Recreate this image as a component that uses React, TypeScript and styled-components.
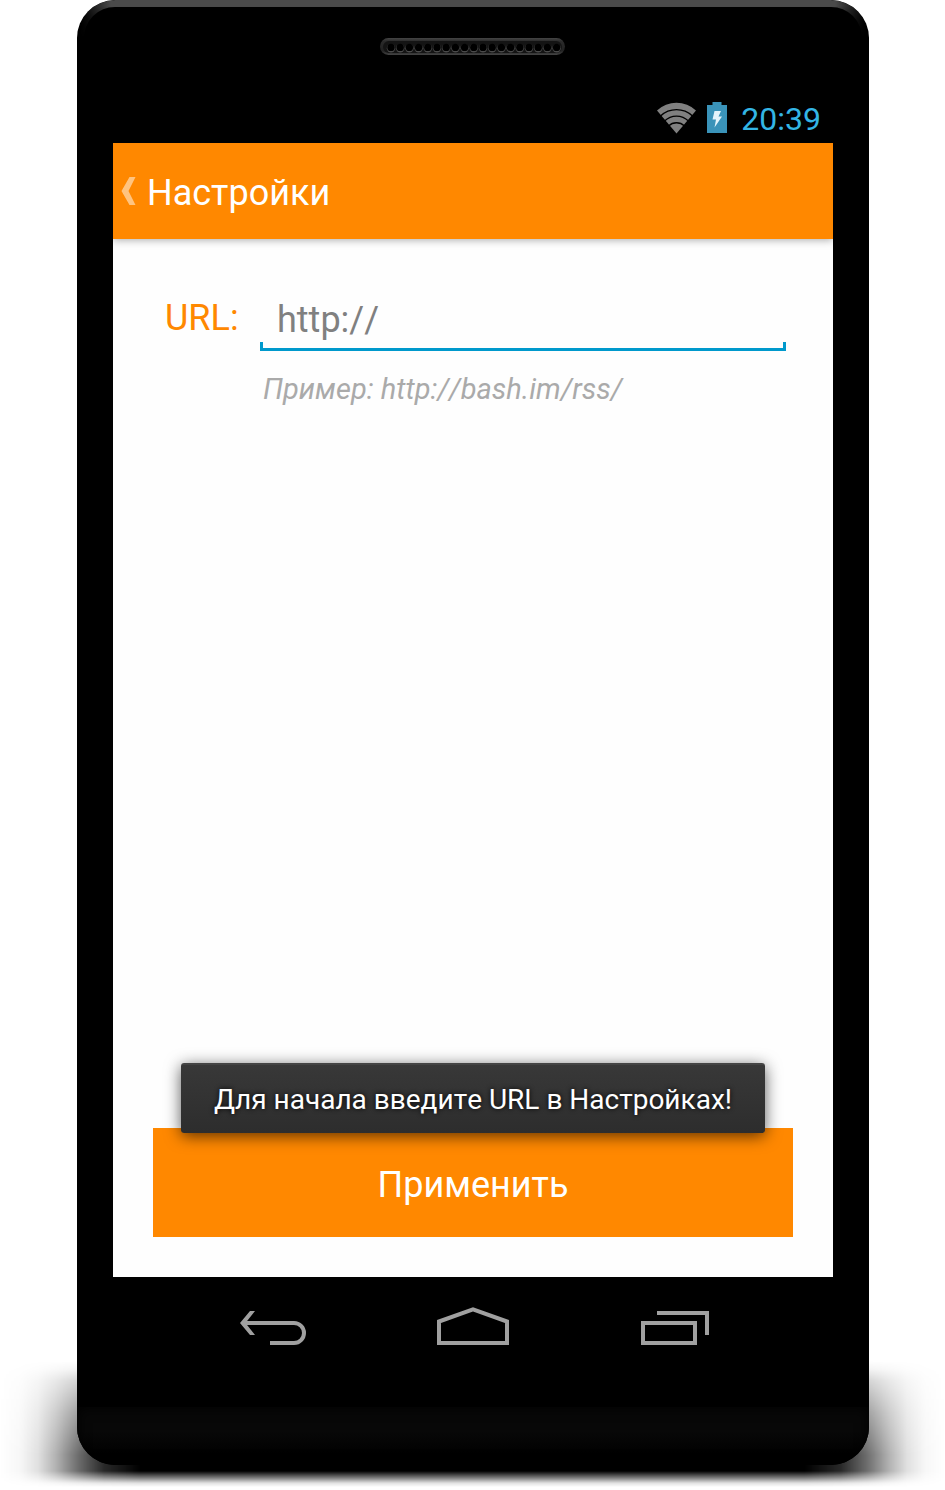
import React, { useState } from "react";
import styled, { createGlobalStyle } from "styled-components";

const GlobalStyle = createGlobalStyle`
  *, *::before, *::after { box-sizing: border-box; }
  body {
    margin: 0;
    background: #fff;
    font-family: Roboto, "Liberation Sans", sans-serif;
    font-kerning: none;
  }
  button, input { font: inherit; font-kerning: none; margin: 0; border: 0; border-radius: 0; }
`;

const Stage = styled.div`
  position: relative;
  min-height: 100vh;
  padding: 0 76px 25px 77px;
  display: flex;
  overflow: hidden;
`;

const GroundShadow = styled.div`
  position: absolute;
  left: 0;
  right: 0;
  bottom: 3px;
  height: 126px;
  background: linear-gradient(
    to right,
    transparent 0,
    rgba(0, 0, 0, 0.03) 20px,
    rgba(0, 0, 0, 0.12) 38px,
    rgba(0, 0, 0, 0.3) 56px,
    rgba(0, 0, 0, 0.56) 77px,
    rgba(0, 0, 0, 0.84) 104px,
    #000 140px,
    #000 calc(100% - 140px),
    rgba(0, 0, 0, 0.84) calc(100% - 104px),
    rgba(0, 0, 0, 0.56) calc(100% - 77px),
    rgba(0, 0, 0, 0.3) calc(100% - 56px),
    rgba(0, 0, 0, 0.12) calc(100% - 38px),
    rgba(0, 0, 0, 0.03) calc(100% - 20px),
    transparent 100%
  );
  mask-image: linear-gradient(
    to bottom,
    transparent 0,
    rgba(0, 0, 0, 0.08) 8px,
    rgba(0, 0, 0, 0.3) 20px,
    rgba(0, 0, 0, 0.65) 52px,
    #000 94px,
    #000 110px,
    rgba(0, 0, 0, 0.5) 117px,
    rgba(0, 0, 0, 0.12) 122px,
    transparent 126px
  );
`;

const Phone = styled.div`
  position: relative;
  flex: 1;
  min-width: 0;
  display: flex;
  flex-direction: column;
  border-radius: 38px;
  overflow: hidden;
  background: #000;

  &::before {
    content: "";
    position: absolute;
    inset: 0 0 auto;
    height: 90px;
    border: 7px solid #4a4a4a;
    border-bottom: 0;
    border-radius: 38px 38px 0 0;
    mask-image:
      linear-gradient(to bottom, #000 6px, transparent 38px),
      linear-gradient(to right, transparent 3px, #000 34px, #000 calc(100% - 34px), transparent calc(100% - 3px));
    mask-composite: intersect;
  }
`;

const Earpiece = styled.div`
  display: flex;
  justify-content: center;
  padding-top: 38px;
  height: 94px;
  svg { display: block; }
`;

const StatusBar = styled.div`
  height: 49px;
  margin: 0 36px;
  padding-right: 12px;
  display: flex;
  align-items: center;
  justify-content: flex-end;
  gap: 10px;
  color: #33b5e5;
  font-size: 32px;
  line-height: 48px;
`;

const Clock = styled.time`
  margin-left: 4px;
`;

const Screen = styled.main`
  position: relative;
  flex: 1;
  margin: 0 36px;
  display: flex;
  flex-direction: column;
  background: #fefefe;
`;

const AppBar = styled.header`
  height: 96px;
  padding: 0 8px;
  display: flex;
  align-items: center;
  gap: 11px;
  background: #ff8800;
  color: #fff;
  box-shadow: 0 1px 8px rgba(0, 0, 0, 0.34);
  clip-path: inset(0 0 -12px 0);
`;

const BackButton = styled.button`
  padding: 0;
  display: flex;
  background: none;
`;

const Title = styled.h1`
  margin: 0;
  padding-top: 4px;
  font-size: 36px;
  font-weight: 400;
  line-height: 48px;
`;

const Form = styled.form`
  flex: 1;
  padding: 56px 40px 40px;
  display: flex;
  flex-direction: column;
  justify-content: space-between;
`;

const Field = styled.div`
  display: grid;
  grid-template-columns: 107px 1fr;
  padding-right: 7px;
`;

const Label = styled.label`
  padding-left: 12px;
  color: #ff8800;
  font-size: 36px;
  line-height: 46px;
`;

const UrlInput = styled.input`
  width: 100%;
  height: 56px;
  padding: 0 17px 7px;
  font-size: 36px;
  color: #333;
  outline: none;
  background:
    linear-gradient(#0099cc, #0099cc) left bottom / 100% 3px no-repeat,
    linear-gradient(#0099cc, #0099cc) left bottom / 3px 9px no-repeat,
    linear-gradient(#0099cc, #0099cc) right bottom / 3px 9px no-repeat;
  &::placeholder { color: #808080; opacity: 1; }
`;

const Hint = styled.p`
  grid-column: 2;
  margin: 20px 0 0;
  padding-left: 3px;
  color: #aaa;
  font-size: 29px;
  font-style: italic;
  line-height: 36px;
`;

const ApplyButton = styled.button`
  height: 109px;
  padding: 4px 0 0;
  background: #ff8800;
  color: #fff;
  font-size: 36px;
`;

const Toast = styled.div`
  position: absolute;
  left: 50%;
  bottom: 144px;
  transform: translateX(-50%);
  height: 70px;
  padding: 0 33px;
  border-radius: 3px;
  border-top: 2px solid #444;
  background: linear-gradient(#383838, #2d2d2d);
  box-shadow: 0 3px 16px rgba(0, 0, 0, 0.65);
  color: #fff;
  font-size: 28px;
  line-height: 70px;
  white-space: nowrap;
  text-shadow: 0 0 5px #000;
`;

const NavBar = styled.nav`
  height: 130px;
  display: flex;
  justify-content: center;
  align-items: flex-start;
`;

const NavButton = styled.button`
  flex: 0 1 200px;
  height: 96px;
  padding: 0;
  display: flex;
  align-items: center;
  justify-content: center;
  background: none;
`;

const Chin = styled.div`
  height: 58px;
  background: linear-gradient(#080808, #080808 24px, #000 50px);
  box-shadow: inset 0 0 14px #000;
`;

const HOLES = Array.from({ length: 19 }, (_, i) => 11 + i * 9.2);

const NAV_ITEMS = [
  { label: "Назад", shape: <><path d="M8 22H57a10 10 0 0 1 0 20H33" /><path d="M3 22 13 10h5L8.5 22 18 34h-5Z" fill="#a0a0a0" stroke="none" /></> },
  { label: "Домой", shape: <path d="M2 42V20.5L36 8.3 70 20.5V42Z" /> },
  { label: "Недавние", shape: <path d="M6 22H58V42H6ZM20 12H70V34" /> },
];

export default function App() {
  const [url, setUrl] = useState("");
  return (
    <>
      <GlobalStyle />
      <Stage>
        <GroundShadow />
        <Phone>
          <Earpiece>
            <svg width="186" height="17" viewBox="0 0 186 17" aria-hidden="true">
              <defs>
                <linearGradient id="rim" x1="0" y1="0" x2="0" y2="1">
                  <stop offset="0" stopColor="#444" />
                  <stop offset="0.2" stopColor="#2a2a2a" />
                  <stop offset="0.75" stopColor="#222" />
                  <stop offset="1" stopColor="#444" />
                </linearGradient>
              </defs>
              <rect width="185" height="17" rx="8.5" fill="url(#rim)" />
              <rect x="3" y="3" width="179" height="12" rx="6" fill="#141414" />
              {HOLES.map((x) => (
                <g key={x}>
                  <circle cx={x} cy="10.2" r="4.2" fill="#4a4a4a" />
                  <circle cx={x} cy="9.4" r="3.7" fill="#000" />
                </g>
              ))}
            </svg>
          </Earpiece>
          <StatusBar>
            <svg width="40" height="35" viewBox="0 0 40 35" aria-hidden="true">
              <path d="M0 9.500A28.500 28.500 0 0 1 39 9.500L19.500 32.500Z" fill="#808080" />
              <g fill="none" stroke="#000" strokeWidth="1.3">
                <path d="M3.500 15A23.500 23.500 0 0 1 35.500 15" />
                <path d="M7.500 20A17 17 0 0 1 31.500 20" />
                <path d="M11.500 25A11.500 11.500 0 0 1 27.500 25" />
              </g>
            </svg>
            <svg width="20" height="35" viewBox="0 0 20 35" aria-hidden="true">
              <path d="M0 4H5.500V1H14.500V4H20V32H0Z" fill="#3a93b9" />
              <path d="M7.500 10H14L11.500 15.500H15L7.500 26.500 9 18.500H5.500Z" fill="#e4f4fb" />
            </svg>
            <Clock>20:39</Clock>
          </StatusBar>
          <Screen>
            <AppBar>
              <BackButton type="button" aria-label="Назад">
                <svg width="15" height="30" viewBox="0 0 15 30" aria-hidden="true">
                  <path d="M8.500 1H14.500L7.500 15 14.500 29H8.500L.5 15Z" fill="#fff" fillOpacity="0.5" />
                </svg>
              </BackButton>
              <Title>Настройки</Title>
            </AppBar>
            <Form onSubmit={(e) => e.preventDefault()}>
              <Field>
                <Label htmlFor="url">URL:</Label>
                <UrlInput
                  id="url"
                  type="text"
                  placeholder="http://"
                  value={url}
                  onChange={(e) => setUrl(e.target.value)}
                />
                <Hint>Пример: http://bash.im/rss/</Hint>
              </Field>
              <ApplyButton type="submit">Применить</ApplyButton>
            </Form>
            <Toast role="status">Для начала введите URL в Настройках!</Toast>
          </Screen>
          <NavBar>
            {NAV_ITEMS.map(({ label, shape }) => (
              <NavButton key={label} type="button" aria-label={label}>
                <svg width="72" height="48" viewBox="0 0 72 48" fill="none" stroke="#a0a0a0" strokeWidth="4" aria-hidden="true">
                  {shape}
                </svg>
              </NavButton>
            ))}
          </NavBar>
          <Chin />
        </Phone>
      </Stage>
    </>
  );
}
